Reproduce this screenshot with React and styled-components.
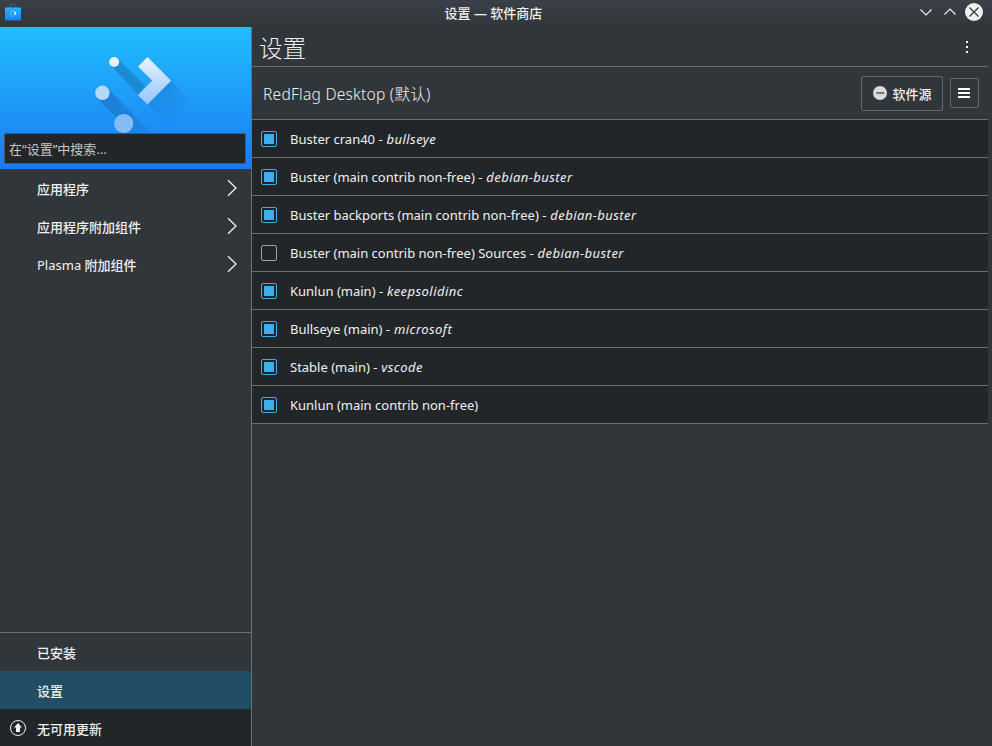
import React from "react";
import styled, { createGlobalStyle } from "styled-components";

const Global = createGlobalStyle`
  * { box-sizing: border-box; }
  body {
    margin: 0;
    background: #31363b;
    color: #eff0f1;
    font: 13px/20px "Noto Sans", "Noto Sans CJK SC", sans-serif;
    overflow: hidden;
  }
`;

const Window = styled.div`
  width: 992px;
  height: 746px;
  display: flex;
  flex-direction: column;
  background: #31363b;
`;

const TitleBar = styled.header`
  height: 27px;
  flex: none;
  display: grid;
  grid-template-columns: 80px 1fr 80px;
  align-items: center;
  padding: 0 8px 0 5px;
  background: linear-gradient(#3b3f48, #31363a);
`;

const AppIcon = styled.svg`
  display: block;
  width: 16px;
  height: 18px;
  margin-top: -3px;
`;

const WindowTitle = styled.div`
  text-align: center;
  font-weight: 500;
  padding: 0 2px 2px 0;
`;

const WindowControls = styled.div`
  display: flex;
  justify-content: flex-end;
  svg { display: block; margin-top: -3px; }
`;

const Body = styled.div`
  flex: 1;
  min-height: 0;
  display: flex;
`;

const Sidebar = styled.nav`
  width: 252px;
  flex: none;
  display: flex;
  flex-direction: column;
  border-right: 1px solid #6b6f72;
`;

const Banner = styled.div`
  height: 142px;
  flex: none;
  display: grid;
  background: linear-gradient(#21bdfe, #1b7af3);
`;

const BannerArt = styled.svg`
  grid-area: 1 / 1;
  display: block;
`;

const Search = styled.div`
  grid-area: 1 / 1;
  align-self: end;
  height: 31px;
  margin: 0 5px 5px 4px;
  padding: 5px 4px;
  border: 1px solid #4d5356;
  border-radius: 2px;
  background: #232629;
  color: #c3c5c6;
  z-index: 1;
`;

const NavList = styled.div`
  flex: 1;
`;

const NavBottom = styled.div`
  height: 114px;
  overflow: hidden;
  border-top: 1px solid #6b6f72;
`;

const NavItem = styled.div`
  height: 38px;
  display: grid;
  grid-template-columns: 37px 1fr 25px;
  align-items: center;
  font-weight: 500;
  background: ${(p) => p.$bg || "transparent"};
  svg { display: block; }
`;

const NavIcon = styled.span`
  padding-left: 9px;
`;

const NavLabel = styled.span`
  padding-top: 2px;
`;

const Latin = styled.span`
  font-weight: 400;
`;

const Main = styled.main`
  flex: 1;
  min-width: 0;
  padding-right: 4px;
`;

const PageHeader = styled.div`
  height: 39px;
  display: flex;
  align-items: center;
  justify-content: space-between;
  margin-right: -4px;
  padding: 2px 20px 0 8px;
`;

const PageTitle = styled.h1`
  margin: 0 0 0 -1px;
  font-size: 23.6px;
  line-height: 36px;
  font-weight: 300;
`;

const SourceHeader = styled.div`
  height: 54px;
  display: flex;
  align-items: center;
  border: solid #6b6f72;
  border-width: 1px 0;
  padding: 0 9px 0 11px;
`;

const SourceTitle = styled.h2`
  flex: 1;
  margin: 0;
  font-size: 15.6px;
  line-height: 24px;
  font-weight: 300;
  letter-spacing: 0.23px;
  padding-top: 2px;
`;

const Button = styled.button`
  width: ${(p) => p.$w}px;
  height: ${(p) => p.$h}px;
  margin-left: ${(p) => p.$gap || 0}px;
  padding: 0 1px 0 0;
  display: flex;
  align-items: center;
  justify-content: center;
  gap: 5px;
  border: 1px solid #65696d;
  border-radius: 2px;
  background: #31363b;
  color: #eff0f1;
  font: inherit;
  font-weight: 500;
`;

const ButtonLabel = styled.span`
  padding-top: 2px;
`;

const SourceRow = styled.label`
  height: 38px;
  display: flex;
  align-items: center;
  padding-left: 9px;
  gap: 13px;
  border-bottom: 1px solid #6b6f72;
  background: #232629;
`;

const Origin = styled.em`
  margin-left: 0.5px;
  letter-spacing: 0.45px;
`;

const Check = styled.span`
  width: 16px;
  height: 16px;
  padding: 2px;
  border: 1px solid ${(p) => (p.$on ? "#3daee9" : "#a1a3a5")};
  border-radius: 2px;
  background: ${(p) => (p.$on ? "#3daee9" : "transparent")} content-box;
`;

const sources = [
  ["Buster cran40", "bullseye", true],
  ["Buster (main contrib non-free)", "debian-buster", true],
  ["Buster backports (main contrib non-free)", "debian-buster", true],
  ["Buster (main contrib non-free) Sources", "debian-buster", false],
  ["Kunlun (main)", "keepsolidinc", true],
  ["Bullseye (main)", "microsoft", true],
  ["Stable (main)", "vscode", true],
  ["Kunlun (main contrib non-free)", "", true],
];

const Chevron = () => (
  <svg width="12" height="18" viewBox="0 0 12 18" fill="none" stroke="#eff0f1" strokeWidth="1.3">
    <path d="M2 1.3 10 9 2 16.7" />
  </svg>
);

const BagIcon = () => (
  <AppIcon viewBox="0 0 16 18">
    <defs>
      <linearGradient id="bag" x2="0" y2="1">
        <stop stopColor="#21bbfd" />
        <stop offset="1" stopColor="#1b7df3" />
      </linearGradient>
    </defs>
    <path d="M5 5V3.2Q5 1 8 1t3 2.2V5" fill="none" stroke="#207694" />
    <rect y="4.5" width="16" height="13" rx=".7" fill="url(#bag)" />
    <path d="M8.800 8.800 9.600 8 11.600 10.200 9.600 12.400 8.800 11.600 9.700 10.200z" fill="#e3f2ff" />
    <circle cx="6.500" cy="8.500" r=".5" fill="#d5edff" />
    <circle cx="5.500" cy="11" r=".8" fill="#a7d4ff" />
    <circle cx="7.300" cy="13.300" r=".7" fill="#8cc2ff" />
  </AppIcon>
);

const Logo = () => (
  <BannerArt width="251" height="142" viewBox="0 27 251 142">
    <defs>
      <linearGradient id="arrow" x2="0" y2="1">
        <stop stopColor="#e9f4ff" />
        <stop offset="1" stopColor="#94c5fa" />
      </linearGradient>
      <linearGradient id="dot" x2="0" y2="1">
        <stop stopColor="#eff7ff" />
        <stop offset="1" stopColor="#d9edff" />
      </linearGradient>
      <linearGradient id="longShade" gradientUnits="userSpaceOnUse" x1="102" y1="93" x2="146" y2="137">
        <stop stopColor="#1b76c8" stopOpacity=".8" />
        <stop offset="1" stopColor="#1b76c8" stopOpacity=".35" />
      </linearGradient>
      <linearGradient id="arrowShade" gradientUnits="userSpaceOnUse" x1="155" y1="88" x2="182" y2="115">
        <stop stopColor="#1b7ad0" stopOpacity=".6" />
        <stop offset="1" stopColor="#1b7ad0" stopOpacity="0" />
      </linearGradient>
    </defs>
    <path d="M117.5 58.5 145 86 138.500 95 110.500 65z" fill="#1c84c9" fillOpacity=".8" />
    <path d="M107 88 153 134H132L97 98z" fill="url(#longShade)" />
    <path d="M171 80.500 202 111.500 179 135.500 147.500 104z" fill="url(#arrowShade)" />
    <path d="M147.500 57 171 80.700 147.500 104.500 138 95 152.300 80.700 138 66.500z" fill="url(#arrow)" />
    <circle cx="114.200" cy="62" r="5" fill="url(#dot)" />
    <circle cx="102.400" cy="92.800" r="7.200" fill="#b4d9fc" />
    <circle cx="123.700" cy="123.500" r="9.600" fill="#85bcf8" />
  </BannerArt>
);

export default function App() {
  return (
    <Window>
      <Global />
      <TitleBar>
        <BagIcon />
        <WindowTitle>设置 — 软件商店</WindowTitle>
        <WindowControls>
          <svg width="66" height="20" viewBox="918 2 66 20" fill="none" stroke="#eff0f1" strokeWidth="1.15">
            <path d="m920.500 9.500 5.500 5.500 5.500-5.500M944.500 14.500l5.500-5.500 5.500 5.500" />
            <circle cx="974" cy="12" r="9" fill="#eff0f1" stroke="none" />
            <path d="m969.500 7.500 9 9m0-9-9 9" stroke="#31363b" />
          </svg>
        </WindowControls>
      </TitleBar>
      <Body>
        <Sidebar>
          <Banner>
            <Logo />
            <Search>在“设置”中搜索...</Search>
          </Banner>
          <NavList>
            <NavItem><NavIcon /><NavLabel>应用程序</NavLabel><Chevron /></NavItem>
            <NavItem><NavIcon /><NavLabel>应用程序附加组件</NavLabel><Chevron /></NavItem>
            <NavItem><NavIcon /><NavLabel><Latin>Plasma</Latin> 附加组件</NavLabel><Chevron /></NavItem>
          </NavList>
          <NavBottom>
            <NavItem><NavIcon /><NavLabel>已安装</NavLabel></NavItem>
            <NavItem $bg="#224e65"><NavIcon /><NavLabel>设置</NavLabel></NavItem>
            <NavItem $bg="#232629">
              <NavIcon>
                <svg width="18" height="18" viewBox="0 0 18 18">
                  <circle cx="9" cy="9" r="7.500" fill="none" stroke="#eff0f1" />
                  <path d="M9 4 13 8.500H11V13H7V8.500H5z" fill="#eff0f1" />
                </svg>
              </NavIcon>
              <NavLabel>无可用更新</NavLabel>
            </NavItem>
          </NavBottom>
        </Sidebar>
        <Main>
          <PageHeader>
            <PageTitle>设置</PageTitle>
            <svg width="10" height="16" viewBox="0 0 10 16" fill="#fff">
              <path d="M4 1h2v2H4zM4 6h2v2H4zM4 11h2v2H4z" />
            </svg>
          </PageHeader>
          <SourceHeader>
            <SourceTitle>RedFlag Desktop (默认)</SourceTitle>
            <Button $w={82} $h={35}>
              <svg width="16" height="16" viewBox="-1 0 16 16">
                <circle cx="8" cy="8" r="7" fill="#d8dadb" />
                <path d="M4.500 7h2v2h-2zM7.200 7h2v2h-2zM9.900 7h2v2h-2z" fill="#555a5e" />
              </svg>
              <ButtonLabel>软件源</ButtonLabel>
            </Button>
            <Button $w={29} $h={30} $gap={7}>
              <svg width="12" height="10" viewBox="0 0 12 10" fill="#fff">
                <path d="M0 0h12v2H0zM0 4h12v2H0zM0 8h12v2H0z" />
              </svg>
            </Button>
          </SourceHeader>
          {sources.map(([name, origin, on]) => (
            <SourceRow key={name}>
              <Check $on={on} />
              <span>{name}{origin && <> - <Origin>{origin}</Origin></>}</span>
            </SourceRow>
          ))}
        </Main>
      </Body>
    </Window>
  );
}
